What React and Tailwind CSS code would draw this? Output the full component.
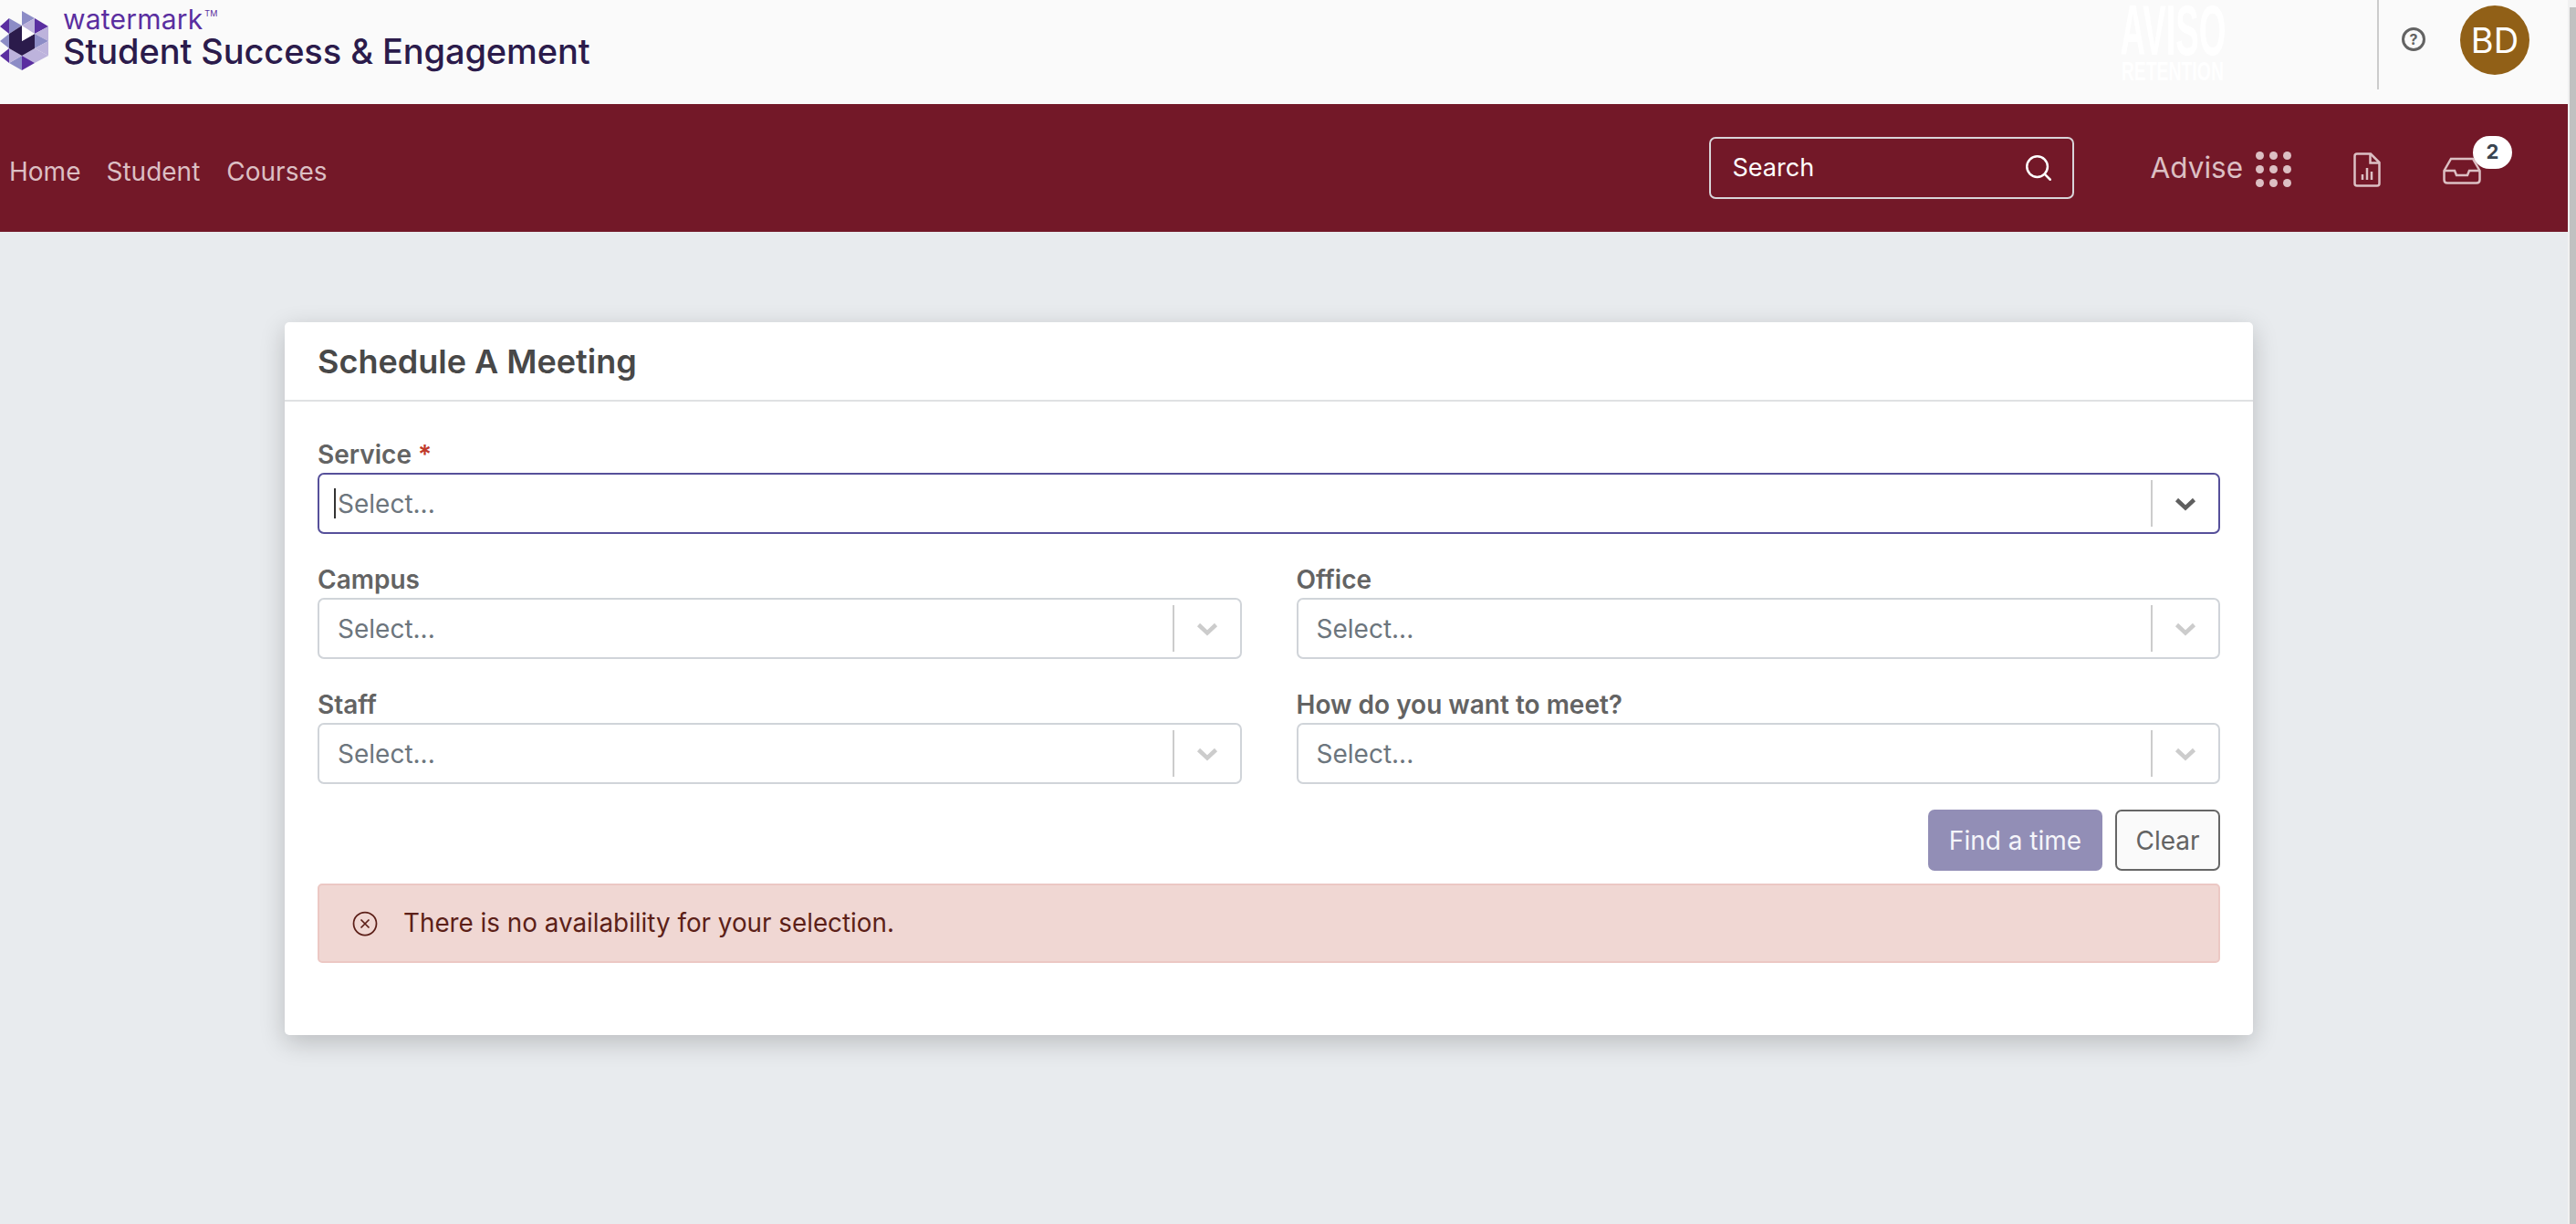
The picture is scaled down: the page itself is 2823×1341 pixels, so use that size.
import React from "react";
import { Search } from "lucide-react";

// logo mark: triangles around a dark centre
const LogoMark = () => (
  <svg width="53" height="66" viewBox="0 0 53 66" className="shrink-0">
    <polygon points="24,0 38,8 24,16" fill="#8c8cc6" />
    <polygon points="38,8 53,17 38,25" fill="#5a2ea0" />
    <polygon points="53,17 53,33 38,25" fill="#bdb3dc" />
    <polygon points="53,33 38,25 38,41" fill="#8c8cc6" />
    <polygon points="53,33 53,49 38,41" fill="#bdb3dc" />
    <polygon points="38,41 53,49 38,57" fill="#bdb3dc" />
    <polygon points="38,41 38,57 24,49" fill="#bdb3dc" />
    <polygon points="24,49 38,57 24,65" fill="#5a2ea0" />
    <polygon points="24,49 24,65 10,57" fill="#8c8cc6" />
    <polygon points="24,49 10,41 10,57" fill="#bdb3dc" />
    <polygon points="10,41 10,57 0,49" fill="#5a2ea0" />
    <polygon points="10,25 10,41 0,33" fill="#8c8cc6" />
    <polygon points="10,8 10,25 0,17" fill="#5a2ea0" />
    <polygon points="10,8 24,16 10,25" fill="#8c8cc6" />
    <polygon points="24,16 38,8 38,25 24,33" fill="#bdb3dc" />
    <polygon points="10,25 24,16 24,33 38,25 38,41 24,49 10,41" fill="#2b1b4b" />
    <polygon points="24,16 38,25 24,33" fill="#ffffff" />
  </svg>
);

const Chevron = ({ dark }) => (
  <svg width="24" height="15" viewBox="0 0 24 15" fill="none">
    <path
      d="M2.5 2.5 L12 11.5 L21.5 2.5"
      stroke={dark ? "#5f5f5f" : "#cccccc"}
      strokeWidth="4.5"
    />
  </svg>
);

const SelectBox = ({ focused }) => (
  <div
    className={`flex items-center h-[67px] rounded-[7px] border-2 bg-white ${
      focused ? "border-[#56509a]" : "border-[#d0d4d9]"
    }`}
  >
    <div className="flex-1 flex items-center pl-[20px] relative">
      {focused && (
        <span className="absolute left-[16px] top-[-2px] w-[2px] h-[33px] bg-[#333]" />
      )}
      <span className="text-[28px] leading-[30px] text-[#6c757d]">Select...</span>
    </div>
    <div className="w-[2px] h-[51px] bg-[#cccccc]" />
    <div className="w-[72px] flex justify-center pt-[1px]">
      <Chevron dark={focused} />
    </div>
  </div>
);

const Field = ({ label, required, focused }) => (
  <div className="flex flex-col">
    <label className="text-[28px] leading-[30px] font-semibold text-[#636363] mb-[5px]">
      {label}
      {required && <span className="text-[#c0392b]"> *</span>}
    </label>
    <SelectBox focused={focused} />
  </div>
);

export default function App() {
  return (
    <div className="font-['Inter',sans-serif] relative min-h-[1341px] bg-[#e8ebee]">
      {/* fake scrollbar */}
      <div className="absolute right-0 top-0 bottom-0 w-[9px] pl-[2px] bg-[#f1f1f1]">
        <div className="mt-[8px] h-[1333px] bg-[#c1c1c1]" />
      </div>

      <header className="h-[114px] bg-[#fafafa] flex pr-[51px]">
        <div className="flex items-start pt-[12px]">
          <LogoMark />
          <div className="ml-[16px] mt-[-6px]">
            <div className="text-[30px] leading-[30px] text-[#5a2ea0] tracking-[0.2px]">
              watermark<sup className="text-[9px] ml-[2px] top-[-14px]">TM</sup>
            </div>
            <div className="text-[38px] leading-[40px] font-medium text-[#2b1b4b] tracking-[-0.1px]">
              Student Success &amp; Engagement
            </div>
          </div>
        </div>
        <div className="ml-auto flex items-start">
          <div className="mr-[165px] w-[118px] flex flex-col items-center text-white font-bold font-['Liberation_Sans',sans-serif]">
            <span className="text-[78px] leading-[66px] scale-x-[0.49] whitespace-nowrap">AVISO</span>
            <span className="text-[29px] leading-[24px] scale-x-[0.67] whitespace-nowrap">RETENTION</span>
          </div>
          <div className="w-[2px] h-[98px] bg-[#cccccc]" />
          <div className="ml-[25px] mt-[30px] w-[26px] h-[26px] rounded-full border-[3px] border-[#636363] flex items-center justify-center text-[16px] leading-none font-bold text-[#636363]">
            ?
          </div>
          <div className="ml-[38px] mt-[6px] w-[76px] h-[76px] rounded-full bg-[#916017] flex items-center justify-center text-[38px] text-white">
            BD
          </div>
        </div>
      </header>

      <nav className="h-[140px] bg-[#731828] flex items-center pr-[104px]">
        <div className="flex gap-[28px] pl-[10px] text-[28px] text-[#dcbfc3] pt-[8px]">
          <span>Home</span>
          <span>Student</span>
          <span className="ml-[1px]">Courses</span>
        </div>
        <div className="ml-auto flex items-center">
          <div className="w-[400px] h-[68px] border-2 border-[#d8d4d8] rounded-[7px] flex items-center justify-between pl-[24px] pr-[20px] text-white text-[27px]">
            <span>Search</span>
            <Search size={34} strokeWidth={1.75} />
          </div>
          <span className="ml-[84px] text-[31.5px] text-[#dcbfc3]">Advise</span>
          <div className="ml-[14px] mt-[2px] grid grid-cols-3 gap-x-[6px] gap-y-[6px]">
            {[1, 2, 3, 4, 5, 6, 7, 8, 9].map((i) => (
              <span key={i} className="w-[9px] h-[9px] rounded-full bg-[#dcbfc3]" />
            ))}
          </div>
          <svg width="30" height="38" viewBox="0 0 30 38" fill="none" stroke="#dcbfc3" strokeWidth="2.5" className="ml-[68px] mt-[3px]">
            <path d="M4 1.5 H19 L28.5 11 V34 Q28.5 36.5 26 36.5 H4 Q1.5 36.5 1.5 34 V4 Q1.5 1.5 4 1.5 Z" />
            <path d="M18.5 2 V11.5 H28" />
            <path d="M10 30 V24 M15 30 V17 M20 30 V21" strokeWidth="2.5" />
          </svg>
          <div className="relative ml-[68px] mt-[5px]">
            <svg width="42" height="30" viewBox="0 0 42 30" fill="none" stroke="#dcbfc3" strokeWidth="2.5">
              <path d="M9 2 H33 L40.5 15 V25 Q40.5 28.5 37 28.5 H5 Q1.5 28.5 1.5 25 V15 Z" />
              <path d="M1.5 15 H13 L15 20 H27 L29 15 H40.5" />
            </svg>
            <span className="absolute left-[33px] top-[-23px] w-[43px] h-[36px] rounded-full bg-white text-[#3a4450] text-[22px] font-bold flex items-center justify-center">
              2
            </span>
          </div>
        </div>
      </nav>

      <main className="pt-[99px] pl-[312px] pr-[354px]">
        <section className="h-[781px] bg-white rounded-[5px] shadow-[0_8px_28px_rgba(0,0,0,0.2)]">
          <div className="h-[87px] flex items-center px-[36px] border-b-2 border-[#dfe1e3]">
            <h1 className="text-[36px] font-semibold text-[#484848]">Schedule A Meeting</h1>
          </div>
          <div className="px-[36px] pt-[43px]">
            <Field label="Service" required focused />
          </div>
          <div className="px-[36px] pt-[35px] grid grid-cols-2 gap-x-[60px] gap-y-[35px]">
            <Field label="Campus" />
            <Field label="Office" />
            <Field label="Staff" />
            <Field label="How do you want to meet?" />
          </div>
          <div className="px-[36px] pt-[28px] flex justify-end gap-[14px]">
            <button className="h-[67px] w-[191px] rounded-[7px] bg-[#928eb6] text-[#f5f5fa] text-[28px]">
              Find a time
            </button>
            <button className="h-[67px] w-[115px] rounded-[7px] border-2 border-[#666] bg-[#fafafa] text-[#636363] text-[28px]">
              Clear
            </button>
          </div>
          <div className="mx-[36px] mt-[14px] h-[87px] rounded-[5px] border-2 border-[#ecc8c4] bg-[#f0d7d3] flex items-center pl-[36px] text-[#5c1f18] text-[27.8px]">
            <svg width="28" height="28" viewBox="0 0 28 28" fill="none" stroke="#5c1f18" strokeWidth="1.75" className="mr-[28px]">
              <circle cx="14" cy="14" r="12.5" />
              <path d="M9.5 9.5 L18.5 18.5 M18.5 9.5 L9.5 18.5" />
            </svg>
            There is no availability for your selection.
          </div>
        </section>
      </main>
    </div>
  );
}
